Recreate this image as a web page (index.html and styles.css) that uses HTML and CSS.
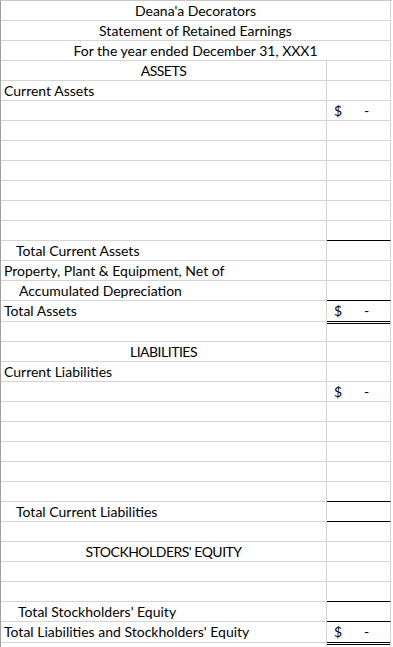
FILE: index.html
```html
<!DOCTYPE html>
<html>
<head>
<meta charset="utf-8">
<link rel="stylesheet" href="styles.css">
</head>
<body>
<div class="sheet">
  <div class="row"><div class="full center">Deana'a Decorators</div></div>
  <div class="row"><div class="full center">Statement of Retained Earnings</div></div>
  <div class="row"><div class="full center">For the year ended December 31, XXX1</div></div>
  <div class="row"><div class="label center caps">ASSETS</div><div class="amt"></div></div>
  <div class="row"><div class="label">Current Assets</div><div class="amt"></div></div>
  <div class="row"><div class="label"></div><div class="amt"><span class="cur">$</span><span class="dash">-</span></div></div>
  <div class="row"><div class="label"></div><div class="amt"></div></div>
  <div class="row"><div class="label"></div><div class="amt"></div></div>
  <div class="row"><div class="label"></div><div class="amt"></div></div>
  <div class="row"><div class="label"></div><div class="amt"></div></div>
  <div class="row"><div class="label"></div><div class="amt"></div></div>
  <div class="row"><div class="label"></div><div class="amt rule"></div></div>
  <div class="row"><div class="label ind16">Total Current Assets</div><div class="amt"></div></div>
  <div class="row"><div class="label">Property, Plant &amp; Equipment, Net of</div><div class="amt"></div></div>
  <div class="row"><div class="label ind19">Accumulated Depreciation</div><div class="amt rule"></div></div>
  <div class="row"><div class="label tall">Total Assets</div><div class="amt total"><span class="cur">$</span><span class="dash">-</span></div></div>
  <div class="row"><div class="label"></div><div class="amt"></div></div>
  <div class="row"><div class="label center caps">LIABILITIES</div><div class="amt"></div></div>
  <div class="row"><div class="label">Current Liabilities</div><div class="amt"></div></div>
  <div class="row"><div class="label"></div><div class="amt"><span class="cur">$</span><span class="dash">-</span></div></div>
  <div class="row"><div class="label"></div><div class="amt"></div></div>
  <div class="row"><div class="label"></div><div class="amt"></div></div>
  <div class="row"><div class="label"></div><div class="amt"></div></div>
  <div class="row"><div class="label"></div><div class="amt"></div></div>
  <div class="row"><div class="label"></div><div class="amt rule"></div></div>
  <div class="row"><div class="label ind16">Total Current Liabilities</div><div class="amt rule"></div></div>
  <div class="row"><div class="label"></div><div class="amt"></div></div>
  <div class="row"><div class="label center caps">STOCKHOLDERS' EQUITY</div><div class="amt"></div></div>
  <div class="row"><div class="label"></div><div class="amt"></div></div>
  <div class="row"><div class="label"></div><div class="amt rule"></div></div>
  <div class="row"><div class="label ind18">Total Stockholders' Equity</div><div class="amt rule"></div></div>
  <div class="row"><div class="label tall">Total Liabilities and Stockholders' Equity</div><div class="amt total"><span class="cur">$</span><span class="dash">-</span></div></div>
  <div class="row"><div class="label"></div><div class="amt"></div></div>
</div>
</body>
</html>
```
FILE: styles.css
```css
html, body {
  margin: 0;
  padding: 0;
  background: #ffffff;
}

body {
  font-family: Lato, "Liberation Sans", Arial, sans-serif;
  font-size: 14px;
  color: #000000;
}

.sheet {
  width: 391px;
  border-top: 1px solid #c8c8c8;
  border-left: 1px solid #9f9f9f;
}

.row {
  display: flex;
}

.full,
.label,
.amt {
  height: 19px;
  line-height: 20px;
  white-space: nowrap;
  border-bottom: 1px solid #d4d4d4;
  border-right: 1px solid #d4d4d4;
}

.full {
  width: 389px;
}

.label {
  width: 322px;
  padding-left: 3px;
}

.amt {
  width: 56px;
  padding-left: 7px;
  display: flex;
}

.center {
  text-align: center;
  padding-left: 0;
  width: 325px;
}

.full.center {
  width: 389px;
}

.caps {
  letter-spacing: -0.5px;
}

.ind16 { padding-left: 15px; width: 310px; }
.ind18 { padding-left: 17px; width: 308px; }
.ind19 { padding-left: 18px; width: 307px; }

.cur {
  width: 30px;
}

.amt.rule {
  border-bottom-color: #000000;
}

.label.tall {
  height: 20px;
}

.amt.total {
  height: 20px;
  border-bottom: 3px double #000000;
  margin-bottom: -2px;
}
```
